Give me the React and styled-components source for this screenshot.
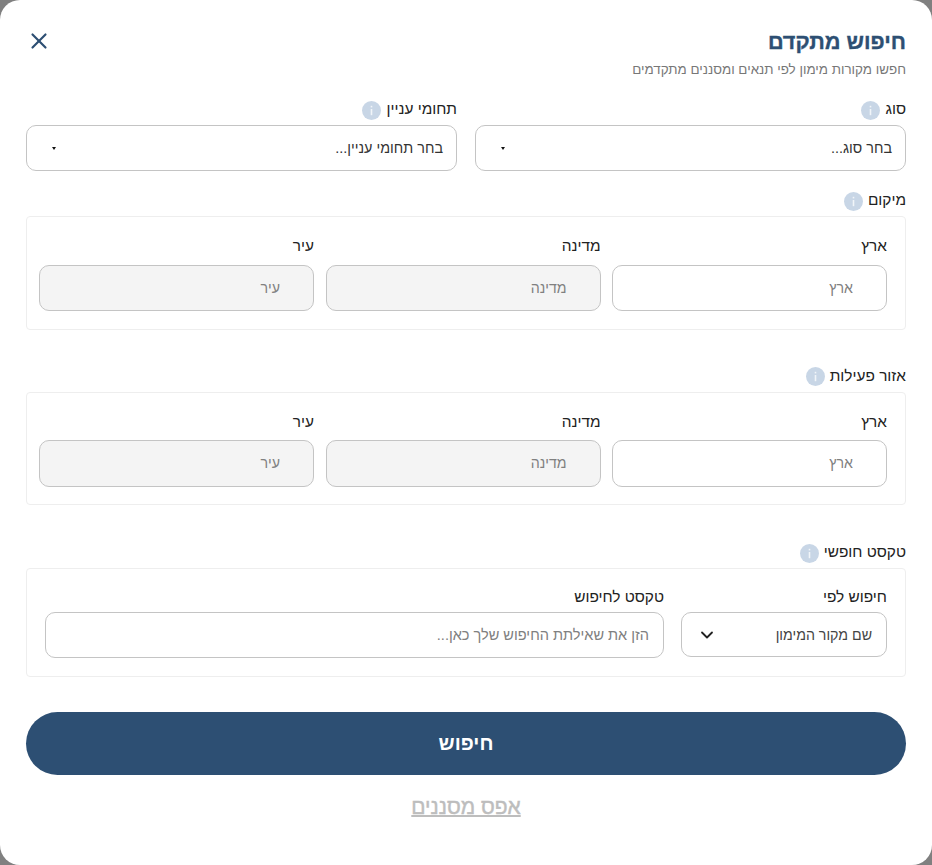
import React from "react";
import styled, { createGlobalStyle } from "styled-components";
import { X, ChevronDown } from "lucide-react";

const GlobalStyle = createGlobalStyle`
  html, body {
    margin: 0;
    padding: 0;
    height: 865px;
    overflow: hidden;
    background: #808080;
  }
  * {
    box-sizing: border-box;
  }
`;

const InfoIcon = () => (
  <InfoBadge>
    <svg width="19" height="19" viewBox="0 0 19 19">
      <circle cx="9.5" cy="9.5" r="9.5" fill="#c8d6e6" />
      <rect x="8.7" y="8" width="1.6" height="6.2" fill="#fff" opacity="0.75" />
      <rect x="8.7" y="4.8" width="1.6" height="1.6" fill="#fff" opacity="0.75" />
    </svg>
  </InfoBadge>
);

const SectionLabel = ({ children }) => (
  <LabelRow>
    <span>{children}</span>
    <InfoIcon />
  </LabelRow>
);

const PlaceField = ({ label, disabled }) => (
  <Field>
    <SubLabel>{label}</SubLabel>
    <PlaceInput placeholder={label} disabled={disabled} />
  </Field>
);

const PlaceSection = ({ title }) => (
  <Section>
    <SectionLabel>{title}</SectionLabel>
    <PlaceBox>
      <PlaceField label="ארץ" />
      <PlaceField label="מדינה" disabled />
      <PlaceField label="עיר" disabled />
    </PlaceBox>
  </Section>
);

const App = () => {
  return (
    <>
      <GlobalStyle />
      <Modal dir="rtl">
        <Header>
          <div>
            <Title>חיפוש מתקדם</Title>
            <Subtitle>חפשו מקורות מימון לפי תנאים ומסננים מתקדמים</Subtitle>
          </div>
          <CloseButton aria-label="close">
            <X size={26} strokeWidth={2} />
          </CloseButton>
        </Header>

        <TopRow>
          <Section>
            <SectionLabel>סוג</SectionLabel>
            <Dropdown>
              <span>בחר סוג...</span>
              <Caret />
            </Dropdown>
          </Section>
          <Section>
            <SectionLabel>תחומי עניין</SectionLabel>
            <Dropdown>
              <span>בחר תחומי עניין...</span>
              <Caret />
            </Dropdown>
          </Section>
        </TopRow>

        <LocationGroup>
          <PlaceSection title="מיקום" />
        </LocationGroup>
        <ActivityGroup>
          <PlaceSection title="אזור פעילות" />
        </ActivityGroup>

        <FreeTextGroup>
          <Section>
            <SectionLabel>טקסט חופשי</SectionLabel>
            <FreeTextBox>
              <Field>
                <FreeTextLabel>חיפוש לפי</FreeTextLabel>
                <SearchBySelect>
                  <span>שם מקור המימון</span>
                  <ChevronDown size={20} strokeWidth={2.2} color="#222" />
                </SearchBySelect>
              </Field>
              <Field>
                <FreeTextLabel>טקסט לחיפוש</FreeTextLabel>
                <FreeTextInput placeholder="הזן את שאילתת החיפוש שלך כאן..." />
              </Field>
            </FreeTextBox>
          </Section>
        </FreeTextGroup>

        <SearchButton>חיפוש</SearchButton>
        <ResetLink>אפס מסננים</ResetLink>
      </Modal>
    </>
  );
};

export default App;

const fontStack = `"Liberation Sans", Arial, sans-serif`;

const Modal = styled.div`
  width: 932px;
  height: 865px;
  background: #fff;
  border-radius: 20px;
  padding: 26px 26px 0;
  font-family: ${fontStack};
  color: #222;
  display: flex;
  flex-direction: column;
  overflow: hidden;
`;
const Header = styled.div`
  display: flex;
  justify-content: space-between;
  align-items: flex-start;
`;
const Title = styled.h1`
  margin: 0;
  font-size: 21.7px;
  line-height: 32px;
  font-weight: 700;
  color: #2d4f73;
  -webkit-text-stroke: 0.35px #2d4f73;
`;
const Subtitle = styled.p`
  margin: 2px 0 0;
  font-size: 13.4px;
  line-height: 20px;
  color: #777;
`;
const CloseButton = styled.button`
  border: none;
  background: none;
  padding: 0;
  margin-top: 2px;
  color: #2d4f73;
  display: flex;
`;
const TopRow = styled.div`
  display: grid;
  grid-template-columns: 1fr 1fr;
  gap: 18px;
  margin-top: 19px;
`;
const Section = styled.section`
  display: flex;
  flex-direction: column;
`;
const LabelRow = styled.div`
  display: flex;
  align-items: center;
  gap: 5px;
  height: 20px;
  margin-bottom: 6px;
  font-size: 15.4px;
  line-height: 20px;
  color: #222;
`;
const InfoBadge = styled.span`
  display: flex;
  margin-top: 2px;
`;
const Dropdown = styled.div`
  height: 46px;
  border: 1px solid #c4c4c4;
  border-radius: 10px;
  padding: 0 13px 0 25px;
  display: flex;
  align-items: center;
  justify-content: space-between;
  font-size: 14.4px;
  color: #333;
`;
const Caret = styled.i`
  width: 0;
  height: 0;
  border-left: 2.5px solid transparent;
  border-right: 2.5px solid transparent;
  border-top: 3px solid #111;
`;
const LocationGroup = styled.div`
  margin-top: 19px;
`;
const ActivityGroup = styled.div`
  margin-top: 36px;
`;
const FreeTextGroup = styled.div`
  margin-top: 37px;
`;
const PlaceBox = styled.div`
  border: 1px solid #eee;
  border-radius: 4px;
  padding: 19px 18px 17.6px 12px;
  display: grid;
  grid-template-columns: repeat(3, 1fr);
  gap: 11.5px;
`;
const Field = styled.div`
  display: flex;
  flex-direction: column;
`;
const SubLabel = styled.label`
  font-size: 15.4px;
  line-height: 20px;
  color: #222;
  margin-bottom: 8.6px;
`;
const FreeTextLabel = styled(SubLabel)`
  margin-bottom: 5px;
`;
const PlaceInput = styled.input`
  height: 46.4px;
  width: 100%;
  border: 1px solid #c4c4c4;
  border-radius: 10px;
  padding: 0 33px 0 12px;
  font-family: inherit;
  font-size: 14.2px;
  background: #fff;
  &:disabled {
    background: #f4f4f4;
  }
  &::placeholder {
    color: #808080;
    opacity: 1;
  }
`;
const FreeTextBox = styled.div`
  border: 1px solid #eee;
  border-radius: 4px;
  padding: 18px;
  display: grid;
  grid-template-columns: 206px 1fr;
  gap: 17px;
`;
const SearchBySelect = styled.div`
  height: 45px;
  border: 1px solid #c4c4c4;
  border-radius: 10px;
  padding: 0 14px 0 15px;
  display: flex;
  align-items: center;
  justify-content: space-between;
  font-size: 14.2px;
  color: #444;
`;
const FreeTextInput = styled.input`
  height: 46px;
  width: 100%;
  border: 1px solid #c4c4c4;
  border-radius: 10px;
  padding: 0 14px;
  font-family: inherit;
  font-size: 14.55px;
  &::placeholder {
    color: #808080;
    opacity: 1;
  }
`;
const SearchButton = styled.button`
  margin-top: 35px;
  height: 63px;
  width: 100%;
  flex: none;
  border: none;
  border-radius: 32px;
  background: #2d4f73;
  color: #fff;
  font-family: inherit;
  font-size: 20px;
  font-weight: 700;
`;
const ResetLink = styled.a`
  margin-top: 18px;
  align-self: center;
  font-size: 21px;
  line-height: 28px;
  font-weight: 400;
  color: #bdbdbd;
  -webkit-text-stroke: 0.45px #bdbdbd;
  text-decoration: underline;
  text-decoration-thickness: 2px;
`;
